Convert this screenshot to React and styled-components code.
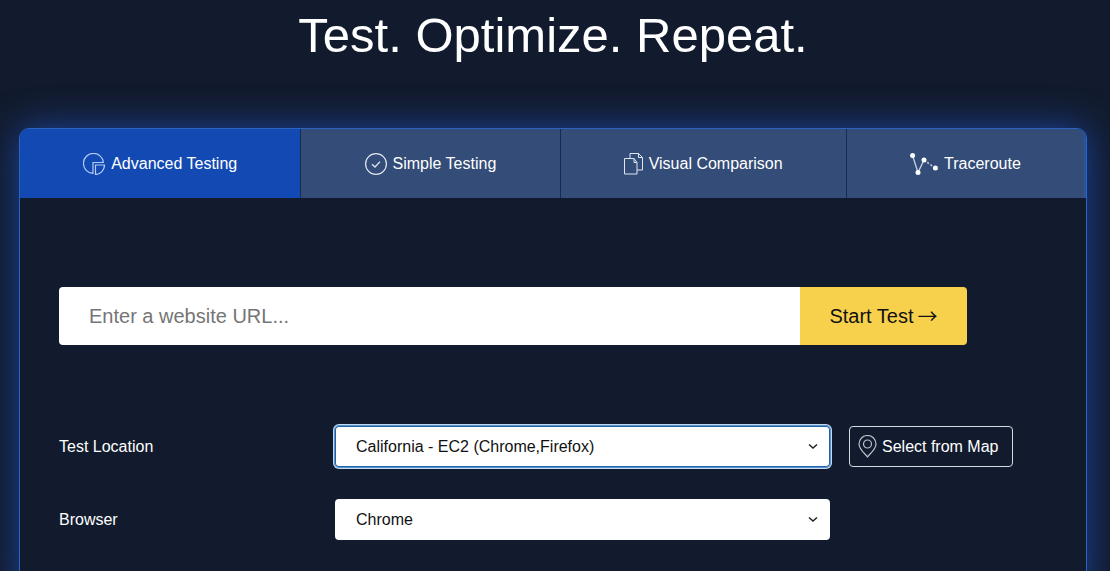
import React, {useState} from 'react'
import styled, {createGlobalStyle} from 'styled-components'

const GlobalStyle = createGlobalStyle`
    * {
        box-sizing: border-box;
    }
    body {
        margin: 0;
        background: #121b2d;
        color: #fff;
        font-family: "Liberation Sans", Arial, Helvetica, sans-serif;
        font-size: 16px;
    }
    button, input, select {
        font: inherit;
    }
`

const Page = styled.main`
    display: flex;
    flex-direction: column;
    min-height: 100vh;
    padding: 0 23px 0 19px;
    overflow: hidden;
`

const Title = styled.h1`
    margin: 0;
    padding: 5px 0 63px;
    font-size: 49px;
    font-weight: 400;
    line-height: 60px;
    text-align: center;
`

const Panel = styled.section`
    flex: 1;
    margin-bottom: -24px;
    padding-bottom: 24px;
    border: 1px solid #2a64c0;
    border-radius: 10px;
    box-shadow: 0 0 36px #1c449c;
    background: #121b2d;
    overflow: hidden;
`

const Tabs = styled.div`
    display: flex;
    padding-right: 1px;
    background: #24509c;
`

const Tab = styled.button`
    display: flex;
    flex: 1 1 auto;
    justify-content: center;
    align-items: center;
    gap: 6px;
    height: 69px;
    padding: 0;
    border: none;
    border-right: 1px solid #1b2a4c;
    background: ${({$active}) => ($active ? '#1249b2' : '#334c78')};
    color: #fff;
    cursor: pointer;
    &:last-child {
        border-right-color: #2a57a4;
        border-radius: 0 8px 0 0;
    }
`

const Content = styled.div`
    padding: 89px 73px 0 39px;
`

const UrlForm = styled.form`
    display: flex;
    height: 58px;
    margin: 0 46px 81px 0;
`

const UrlInput = styled.input`
    flex: 1;
    min-width: 0;
    padding: 0 30px;
    border: none;
    border-radius: 4px 0 0 4px;
    background: #fff;
    color: #111;
    font-size: 20px;
    &::placeholder {
        color: #757575;
    }
`

const StartButton = styled.button`
    display: flex;
    justify-content: center;
    align-items: center;
    gap: 4px;
    width: 167px;
    padding: 0;
    border: none;
    border-radius: 0 4px 4px 0;
    background: #f8d14c;
    color: #111;
    font-size: 20px;
    cursor: pointer;
`

const Arrow = styled.span`
    font-family: "Noto Sans CJK JP", sans-serif;
    line-height: 20px;
`

const Row = styled.div`
    display: grid;
    grid-template-columns: 276px 1fr 164px;
    align-items: center;
    height: 41px;
    margin-bottom: 32px;
    &:last-child {
        margin-bottom: 0;
    }
`

const SelectBox = styled.div`
    position: relative;
    height: 41px;
    margin-right: 19px;
    svg {
        position: absolute;
        top: 17px;
        right: 12px;
        pointer-events: none;
    }
`

const Select = styled.select`
    width: 100%;
    height: 100%;
    padding: 0 32px 0 21px;
    appearance: none;
    border: none;
    border-radius: 4px;
    outline: none;
    background: #fff;
    color: #111;
    box-shadow: ${({$focused}) =>
        $focused ? 'inset 0 0 0 1px #1c62ab, 0 0 0 1px #5c93c9, 0 0 0 2px #c3dbf0' : 'none'};
`

const MapButton = styled.button`
    display: flex;
    align-items: center;
    gap: 5px;
    height: 41px;
    padding: 0 8px;
    border: 1px solid #d5d9e0;
    border-radius: 4px;
    background: none;
    color: #fff;
    white-space: nowrap;
    cursor: pointer;
`

const PieIcon = () => (
    <svg width="22" height="22" viewBox="0 0 22 22" fill="none" stroke="#b4cbf8" strokeWidth="1.2">
        <path d="M10 20.400A10 10 0 1 1 20.400 9.500H10z" />
        <path d="M12.500 12h9a9.500 9.500 0 0 1-9 9.500z" />
    </svg>
)

const CheckIcon = () => (
    <svg width="22" height="22" viewBox="0 0 22 22" fill="none" stroke="#dfe6f2">
        <circle cx="11" cy="11" r="10.400" strokeWidth="1.200" />
        <path d="M7 11.200l3 2.800 5-5.400" strokeWidth="1.300" />
    </svg>
)

const PagesIcon = () => (
    <svg width="19" height="22" viewBox="0 0 19 22" fill="none" stroke="#dfe6f2">
        <path d="M.5 5.500h9.500l3 4v11.500H.5z" />
        <path d="M6 5.500v-5h8.500l4 4v12.500H13M14.500.5v4h4M10 5.500v4h3" />
    </svg>
)

const RouteIcon = () => (
    <svg width="28" height="22" viewBox="0 0 28 22" fill="#fff" stroke="#c9d3e6">
        <path d="M2.500 2.500L8 19.500L14 7" fill="none" strokeWidth="1.300" />
        <path d="M14 7L25 15" fill="none" strokeWidth="1.600" strokeDasharray="2 2" />
        <g stroke="none">
            <circle cx="2.600" cy="2.600" r="2.500" />
            <circle cx="8" cy="19.400" r="2.500" />
            <circle cx="14" cy="7" r="2.500" />
            <circle cx="25.400" cy="15" r="2.500" />
        </g>
    </svg>
)

const PinIcon = () => (
    <svg width="19" height="23" viewBox="0 0 19 23" fill="none" stroke="#b9c0cc" strokeWidth="1.200">
        <path d="M9.500 22C7.500 19 1 14.500 1 9a8.500 8.500 0 0 1 17 0c0 5.500-6.500 10-8.500 13z" />
        <circle cx="9.500" cy="9" r="4" />
    </svg>
)

const Chevron = () => (
    <svg width="10" height="7" viewBox="0 0 10 7" fill="none" stroke="#222" strokeWidth="1.500">
        <path d="M1 1.500l4 3.500 4-3.500" />
    </svg>
)

const tabs = [
    {name: 'Advanced Testing', Icon: PieIcon},
    {name: 'Simple Testing', Icon: CheckIcon},
    {name: 'Visual Comparison', Icon: PagesIcon},
    {name: 'Traceroute', Icon: RouteIcon},
]

const App = () => {
    const [tab, setTab] = useState('Advanced Testing')
    const [focused, setFocused] = useState('location')

    return (
        <Page>
            <GlobalStyle />
            <Title>Test. Optimize. Repeat.</Title>
            <Panel>
                <Tabs role="tablist">
                    {tabs.map(({name, Icon}) => (
                        <Tab
                            key={name}
                            type="button"
                            role="tab"
                            aria-selected={tab === name}
                            $active={tab === name}
                            onClick={() => setTab(name)}
                        >
                            <Icon />
                            {name}
                        </Tab>
                    ))}
                </Tabs>
                <Content>
                    <UrlForm onSubmit={(e) => e.preventDefault()}>
                        <UrlInput
                            type="text"
                            aria-label="Website URL"
                            placeholder="Enter a website URL..."
                        />
                        <StartButton type="submit">
                            Start Test <Arrow>→</Arrow>
                        </StartButton>
                    </UrlForm>
                    <Row>
                        <label htmlFor="location">Test Location</label>
                        <SelectBox>
                            <Select
                                id="location"
                                $focused={focused === 'location'}
                                onFocus={() => setFocused('location')}
                            >
                                <option>California - EC2 (Chrome,Firefox)</option>
                            </Select>
                            <Chevron />
                        </SelectBox>
                        <MapButton type="button">
                            <PinIcon />
                            Select from Map
                        </MapButton>
                    </Row>
                    <Row>
                        <label htmlFor="browser">Browser</label>
                        <SelectBox>
                            <Select
                                id="browser"
                                $focused={focused === 'browser'}
                                onFocus={() => setFocused('browser')}
                            >
                                <option>Chrome</option>
                            </Select>
                            <Chevron />
                        </SelectBox>
                    </Row>
                </Content>
            </Panel>
        </Page>
    )
}

export default App
